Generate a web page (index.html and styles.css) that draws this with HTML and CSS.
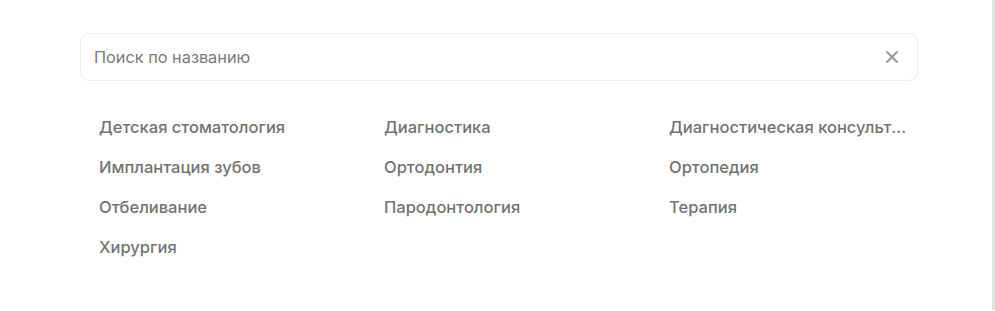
FILE: index.html
```html
<!DOCTYPE html>
<html lang="ru">
<head>
<meta charset="utf-8">
<link rel="stylesheet" href="styles.css">
</head>
<body>
<div class="page">
  <div class="content">
    <div class="search">
      <span class="placeholder">Поиск по названию</span>
      <svg class="clear" width="14" height="14" viewBox="0 0 14 14"><path d="M2 2L12 12M12 2L2 12" stroke="#9a9a9a" stroke-width="2" stroke-linecap="round" fill="none"/></svg>
    </div>
    <ul class="list">
      <li>Детская стоматология</li>
      <li>Диагностика</li>
      <li>Диагностическая консультация</li>
      <li>Имплантация зубов</li>
      <li>Ортодонтия</li>
      <li>Ортопедия</li>
      <li>Отбеливание</li>
      <li>Пародонтология</li>
      <li>Терапия</li>
      <li>Хирургия</li>
    </ul>
  </div>
  <div class="scrollbar"></div>
</div>
</body>
</html>
```
FILE: styles.css
```css
html, body {
  margin: 0;
  padding: 0;
  background: #fff;
}
.page {
  display: flex;
  width: 995px;
  height: 311px;
  font-family: "Inter", "Liberation Sans", sans-serif;
}
.content {
  flex: 1;
  padding: 33px 74px 0 80px;
}
.search {
  height: 46px;
  border: 1px solid #ececec;
  border-radius: 9px;
  display: flex;
  align-items: center;
  justify-content: space-between;
  padding: 0 18px 0 13px;
}
.placeholder {
  font-size: 16.3px;
  color: #7a7a7a;
}
.clear {
  display: block;
}
.list {
  list-style: none;
  margin: 0;
  padding: 36px 0 0 19px;
  display: grid;
  grid-template-columns: 240px 240px 240px;
  column-gap: 45px;
  row-gap: 0;
}
.list li {
  height: 40px;
  line-height: 20px;
  font-size: 16.5px;
  font-weight: 500;
  color: #737373;
  white-space: nowrap;
  overflow: hidden;
  text-overflow: ellipsis;
}
.scrollbar {
  width: 3px;
  height: 310px;
  background: #e2e2e2;
}
```
